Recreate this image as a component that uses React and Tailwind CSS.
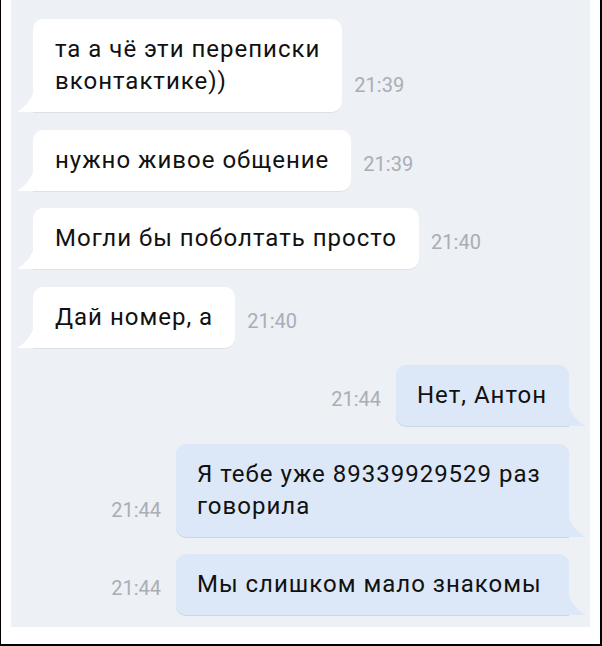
const messages = [
  { id: 1, out: false, lines: ["та а чё эти переписки", "вконтактике))"], time: "21:39" },
  { id: 2, out: false, lines: ["нужно живое общение"], time: "21:39" },
  { id: 3, out: false, lines: ["Могли бы поболтать просто"], time: "21:40" },
  { id: 4, out: false, lines: ["Дай номер, а"], time: "21:40" },
  { id: 5, out: true, lines: ["Нет, Антон"], time: "21:44" },
  { id: 6, out: true, lines: ["Я тебе уже 89339929529 раз", "говорила"], time: "21:44", wide: true },
  { id: 7, out: true, lines: ["Мы слишком мало знакомы"], time: "21:44", wide: true },
];

const Tail = ({ out }) =>
  out ? (
    <svg
      width="17"
      height="22"
      viewBox="0 0 17 22"
      className="absolute -right-[16px] bottom-0"
    >
      <path d="M0 0 Q4 14 17 22 L0 22 Z" fill="#dce8f7" />
    </svg>
  ) : (
    <svg
      width="17"
      height="21"
      viewBox="0 0 17 21"
      className="absolute -left-[16px] bottom-0"
    >
      <path d="M17 0 Q13 13 0 21 L17 21 Z" fill="#ffffff" />
    </svg>
  );

const Time = ({ children }) => (
  <span className="mb-[15px] text-[20px] leading-[24px] text-[#a8aeb6] shrink-0">
    {children}
  </span>
);

const Bubble = ({ m }) => (
  <div
    className={
      m.out
        ? "relative rounded-[10px] rounded-br-none bg-[#dce8f7] pl-[21px] pr-[22px] pt-[14px] pb-[15px] shadow-[0_1px_0_#c9d6e6]"
        : "relative rounded-[10px] rounded-bl-none bg-white pl-[22px] pr-[22px] pt-[14px] pb-[15px] shadow-[0_1px_0_#dde1e6]"
    }
  >
    <Tail out={m.out} />
    <p className="text-[24px] leading-[32px] tracking-[1px] text-[#111] whitespace-nowrap">
      {m.lines.map((l, i) => (
        <span key={i} className="block">
          {l}
        </span>
      ))}
    </p>
  </div>
);

export default function App() {
  return (
    <div
      className="w-[602px] h-[646px] bg-white border-l border-r-2 border-b-2 border-black box-border"
      style={{ fontFamily: "Roboto, 'Noto Sans', sans-serif" }}
    >
      <div className="ml-[10px] w-[579px] h-[627px] bg-[#edf0f4] pt-[19px] flex flex-col gap-[17.5px]">
        {messages.map((m) =>
          m.out ? (
            <div key={m.id} className="flex items-end justify-end gap-[15px] pr-[21px]">
              <Time>{m.time}</Time>
              <div className={m.wide ? "w-[393px]" : ""}>
                <Bubble m={m} />
              </div>
            </div>
          ) : (
            <div key={m.id} className="flex items-end gap-[12px] pl-[22px]">
              <Bubble m={m} />
              <Time>{m.time}</Time>
            </div>
          )
        )}
      </div>
    </div>
  );
}
